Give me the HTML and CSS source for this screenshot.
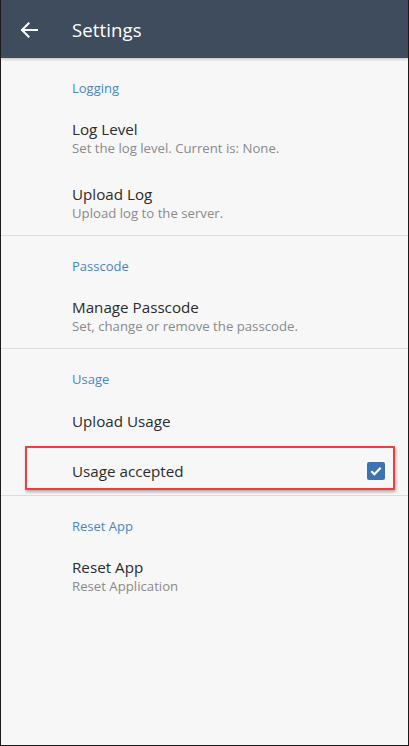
FILE: index.html
```html
<!DOCTYPE html>
<html>
<head>
<meta charset="utf-8">
<link rel="stylesheet" href="styles.css">
</head>
<body>
<div class="frame">
  <header class="appbar">
    <svg class="back" width="18" height="16" viewBox="0 0 18 16">
      <path d="M17 8H2M8.5 1.5L2 8l6.5 6.5" fill="none" stroke="#fff" stroke-width="2" stroke-linecap="square"/>
    </svg>
    <h1 class="title">Settings</h1>
  </header>
  <main class="list">
    <section class="group">
      <div class="group-head">Logging</div>
      <div class="item two">
        <div class="item-title">Log Level</div>
        <div class="item-sub">Set the log level. Current is: None.</div>
      </div>
      <div class="item two">
        <div class="item-title">Upload Log</div>
        <div class="item-sub">Upload log to the server.</div>
      </div>
    </section>
    <section class="group">
      <div class="group-head">Passcode</div>
      <div class="item two">
        <div class="item-title">Manage Passcode</div>
        <div class="item-sub">Set, change or remove the passcode.</div>
      </div>
    </section>
    <section class="group">
      <div class="group-head">Usage</div>
      <div class="item one">
        <div class="item-title">Upload Usage</div>
      </div>
      <div class="item check-row">
        <div class="item-title">Usage accepted</div>
        <span class="checkbox">
          <svg width="18" height="18" viewBox="0 0 18 18"><path d="M4.3 9.2l3.1 3.1 6.3-6.6" fill="none" stroke="#fff" stroke-width="2.2"/></svg>
        </span>
        <span class="highlight"></span>
      </div>
    </section>
    <section class="group last">
      <div class="group-head">Reset App</div>
      <div class="item two">
        <div class="item-title">Reset App</div>
        <div class="item-sub">Reset Application</div>
      </div>
    </section>
  </main>
</div>
</body>
</html>
```
FILE: styles.css
```css
* { box-sizing: border-box; }
html, body { margin: 0; padding: 0; }
body {
  font-family: "Open Sans", "Liberation Sans", sans-serif;
  background: #f7f7f7;
}
.frame {
  width: 409px;
  height: 746px;
  border: 1px solid #1a1a1a;
  border-top: none;
  background: #f7f7f7;
  overflow: hidden;
}
.appbar {
  height: 58px;
  background: #3e4c5d;
  display: flex;
  align-items: center;
  padding-left: 19px;
  box-shadow: 0 1px 3px rgba(0,0,0,0.25);
  position: relative;
  z-index: 1;
}
.back { display: block; margin-top: 1px; }
.title {
  margin: 0 0 0 34px;
  color: #fff;
  font-weight: 400;
  font-size: 18.6px;
  letter-spacing: 0.1px;
}
.group {
  border-bottom: 1px solid #dcdcdc;
}
.group.last { border-bottom: none; }
.group-head {
  padding: 22px 0 8px 71px;
  line-height: 17px;
  font-size: 13px;
  color: #4a86bd;
}
.item {
  padding-left: 71px;
  position: relative;
}
.item.two {
  height: 65px;
  padding-top: 14px;
}
.item.one {
  height: 48px;
  padding-top: 2px;
  display: flex;
  align-items: center;
}
.item-title {
  font-size: 15.2px;
  line-height: 20px;
  color: #2b2b2b;
}
.item-sub {
  font-size: 13.2px;
  line-height: 19px;
  color: #8a8a8a;
}
.check-row {
  height: 51px;
  padding-top: 2px;
  display: flex;
  align-items: center;
  justify-content: space-between;
  padding-right: 23px;
}
.checkbox {
  width: 18px;
  height: 18px;
  border-radius: 2px;
  background: #3b74b0;
  display: block;
}
.checkbox svg { display: block; }
.highlight {
  position: absolute;
  left: 24px;
  right: 13px;
  top: 2px;
  bottom: 5px;
  border: 2px solid #ee3e3e;
  box-shadow: 1px 2px 3px rgba(0,0,0,0.3);
  pointer-events: none;
}
```
